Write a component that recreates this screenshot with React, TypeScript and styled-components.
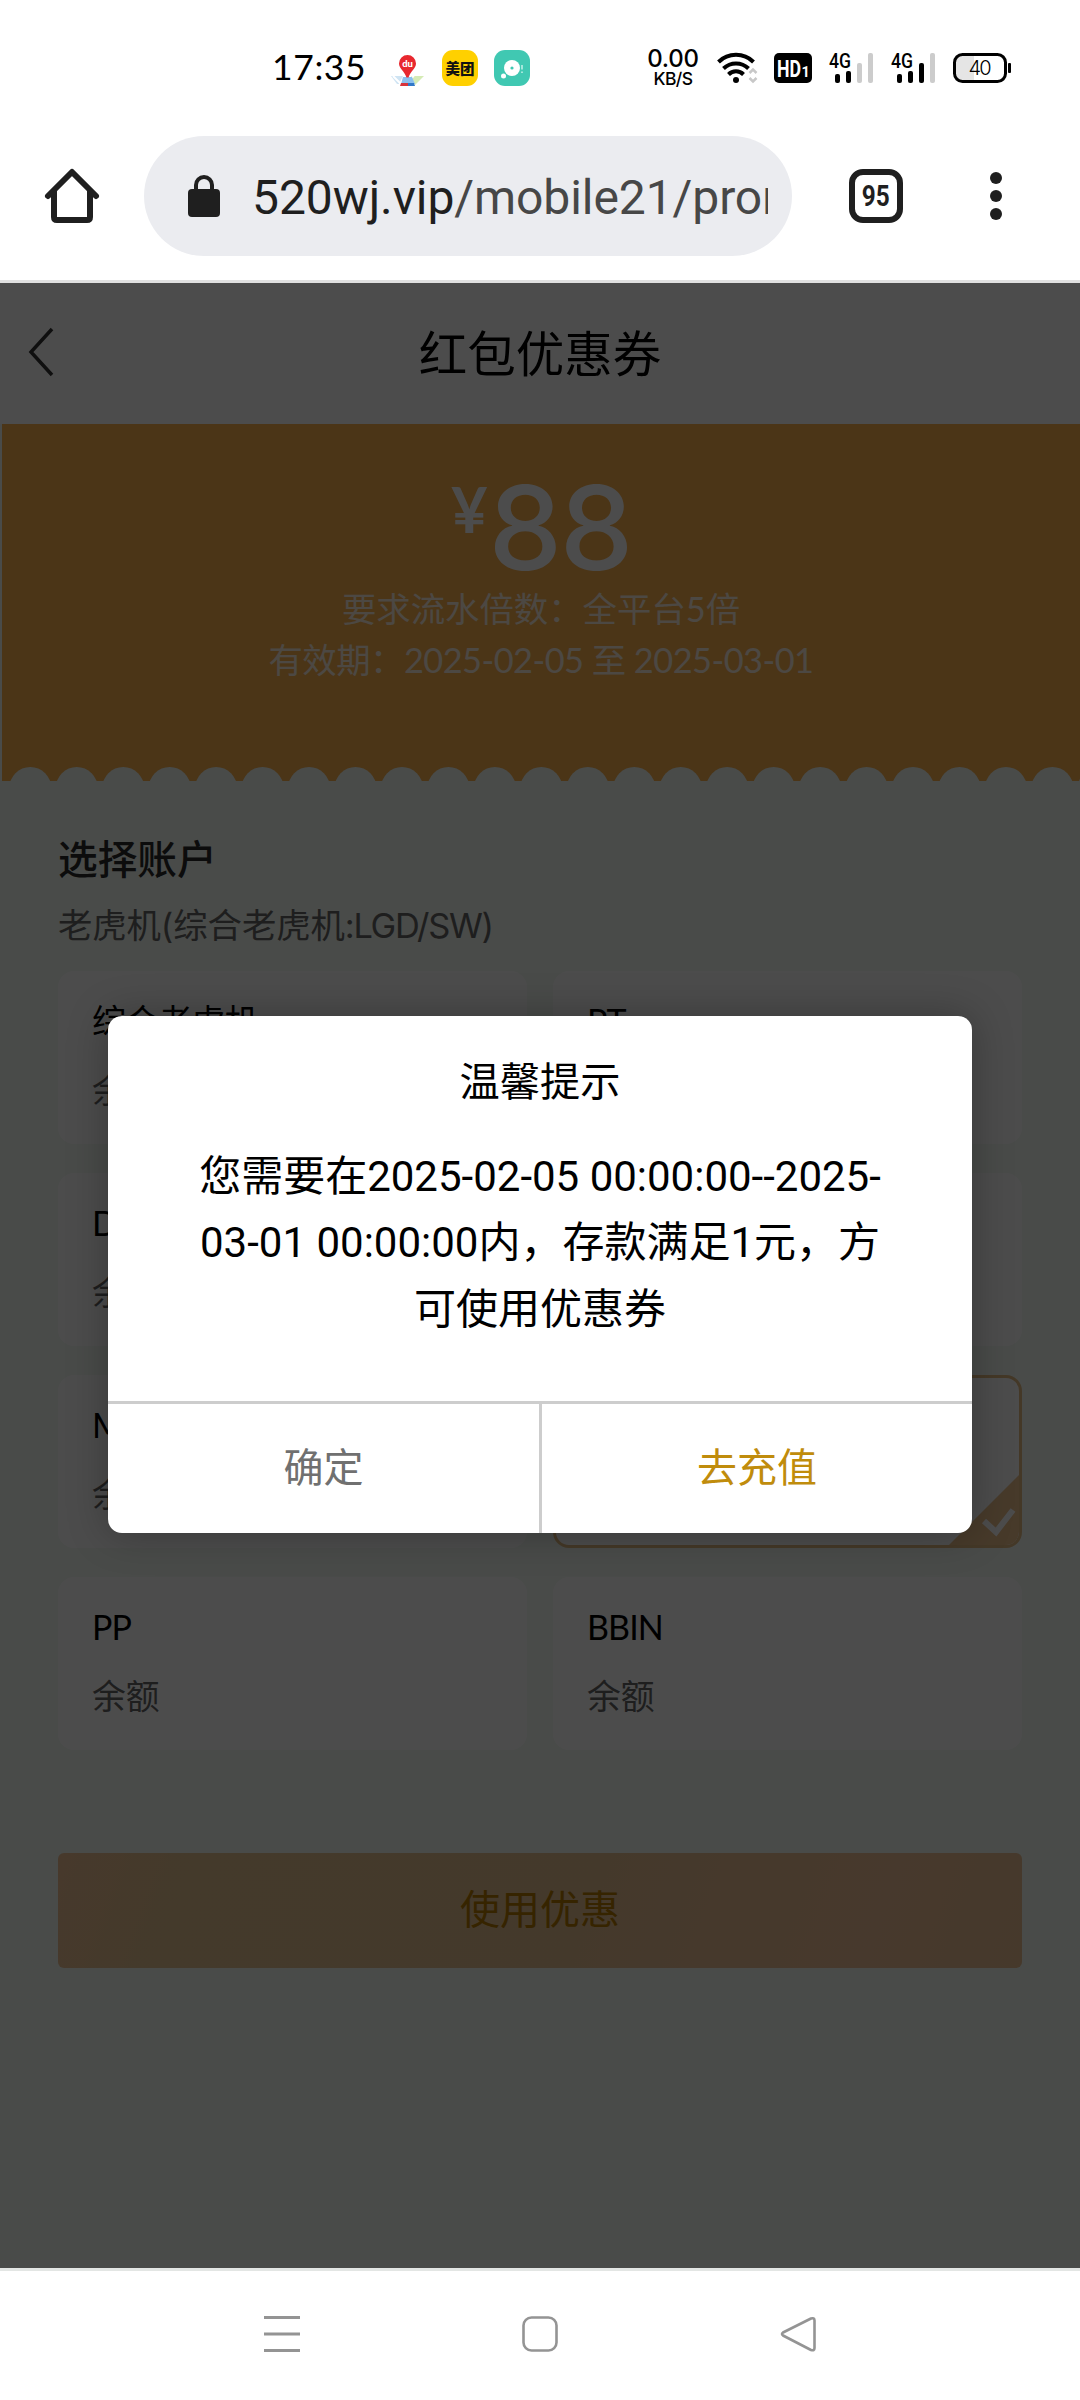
import React from "react";
import styled, { createGlobalStyle } from "styled-components";

const cjk = `"Noto Sans CJK SC", sans-serif`;

const GlobalStyle = createGlobalStyle`
  * { box-sizing: border-box; }
  body { margin: 0; background: #fff; font-family: Roboto, ${cjk}; }
  button { border: 0; background: none; padding: 0; font: inherit; }
  svg { display: block; flex: none; overflow: visible; }
`;

const Screen = styled.div`
  width: 1080px;
  height: 2400px;
  display: flex;
  flex-direction: column;
  overflow: hidden;
  background: #fff;
`;

const StatusBar = styled.div`
  height: 136px;
  padding: 0 68px 0 272px;
  display: flex;
  justify-content: space-between;
`;

const StatusGroup = styled.div<{ $gap: number }>`
  display: flex;
  align-items: center;
  height: 135px;
  gap: ${(p) => p.$gap}px;
`;

const Clock = styled.span`
  width: 101px;
  font: 400 35.5px/38px Lato, sans-serif;
  padding-bottom: 2px;
  letter-spacing: 0.6px;
  color: #000;
  white-space: nowrap;
`;

const AppTile = styled.span<{ $bg: string }>`
  display: flex;
  align-items: center;
  justify-content: center;
  width: 36px;
  height: 36px;
  border-radius: 11px;
  background: ${(p) => p.$bg};
  font: 900 14.5px/36px ${cjk};
  color: #111;
`;

const Speed = styled.span`
  display: flex;
  flex-direction: column;
  align-items: center;
  width: 54px;
  font: 500 24px/21px Inter, sans-serif;
  letter-spacing: -0.2px;
  color: #000;
  small {
    font: 500 17.5px/19px Inter, sans-serif;
    letter-spacing: -0.6px;
  }
`;

const Toolbar = styled.div`
  height: 147px;
  border-bottom: 3px solid #e0e0e0;
  display: flex;
  align-items: flex-start;
`;

const ToolButton = styled.button<{ $width: number }>`
  width: ${(p) => p.$width}px;
  height: 120px;
  display: flex;
  align-items: center;
  justify-content: center;
`;

const AddressPill = styled.div`
  width: 648px;
  height: 120px;
  border-radius: 60px;
  background: #ebecf0;
  display: flex;
  align-items: center;
  padding: 0 24px 0 44px;
`;

const Address = styled.div`
  flex: 1;
  margin-left: 32px;
  padding-top: 3px;
  overflow: hidden;
  white-space: nowrap;
  font: 400 48px/60px Roboto, sans-serif;
  letter-spacing: -0.08px;
  color: #474747;
  b {
    font-weight: 400;
    color: #1f1f1f;
  }
`;

const TabCount = styled.span`
  width: 54px;
  height: 54px;
  border: 6px solid #1f1f1f;
  border-radius: 14px;
  display: flex;
  align-items: center;
  justify-content: center;
  font: 700 29px/42px Roboto, sans-serif;
  color: #1f1f1f;
  span {
    transform: scaleX(0.84);
  }
`;

const Page = styled.main`
  position: relative;
  height: 1985px;
  background: #f4faf4;
`;

const PageHeader = styled.header`
  height: 141px;
  display: flex;
  align-items: center;
  padding: 0 29px 3px;
  background: #fff;
  h1 {
    flex: 1;
    margin: -3px 24px 0 0;
    text-align: center;
    font: 400 48.5px/70px ${cjk};
    color: #000;
  }
`;

const Banner = styled.section`
  margin-left: 2px;
  height: 357px;
  display: flex;
  flex-direction: column;
  align-items: center;
  background: #fab14d;
  color: #fff;
`;

const Amount = styled.div`
  display: flex;
  align-items: flex-start;
  height: 163px;
  padding-top: 44px;
  font: 500 117px/120px Inter, sans-serif;
  letter-spacing: -2.4px;
  small {
    margin: -4px 1px 0 0;
    font: 700 63px/90px Lato, sans-serif;
    letter-spacing: 0;
  }
`;

const BannerLine = styled.div<{ $tracking?: number }>`
  height: 51px;
  font: 400 34.4px/44px Lato, ${cjk};
  letter-spacing: ${(p) => p.$tracking ?? 0}px;
  white-space: nowrap;
  opacity: 0.82;
`;

const Scallops = styled.svg`
  margin-top: auto;
`;

const Content = styled.section`
  padding: 50px 58px 0;
  h2 {
    margin: 0;
    font: 500 39.7px/52px ${cjk};
    color: #2b2b2b;
  }
`;

const Subtitle = styled.p`
  margin: 18px 0 20px;
  font: 400 34.4px/50px Inter, ${cjk};
  letter-spacing: -0.1px;
  color: #666;
  span {
    letter-spacing: -1.3px;
  }
`;

const AccountGrid = styled.div`
  display: grid;
  grid-template-columns: 469px 469px;
  gap: 29px 26px;
`;

const AccountCard = styled.div<{ $selected?: boolean }>`
  position: relative;
  height: 173px;
  overflow: hidden;
  padding: 27px 31px;
  border: 3px solid ${(p) => (p.$selected ? "#e3bc84" : "#fff")};
  border-radius: 16px;
  background: #fff;
`;

const AccountName = styled.div`
  font: 400 34px/40px Lato, ${cjk};
  letter-spacing: -0.9px;
  color: #000;
  white-space: nowrap;
`;

const Balance = styled.div`
  margin-top: 26px;
  font: 400 33.8px/44px ${cjk};
  color: #666;
`;

const CornerCheck = styled.svg`
  position: absolute;
  right: 0;
  bottom: 0;
`;

const UseButton = styled.button`
  display: block;
  width: 964px;
  height: 115px;
  padding-bottom: 6px;
  margin-top: 103px;
  border-radius: 6px;
  background: linear-gradient(110deg, #eec094 0%, #e3c190 14%, #e5c092 55%, #efbf96 84%, #e9c092 100%);
  font: 400 40px/109px ${cjk};
  color: #b47800;
`;

const Mask = styled.div`
  position: absolute;
  inset: 0;
  background: rgba(0, 0, 0, 0.7);
`;

const Dialog = styled.div`
  position: absolute;
  left: 108px;
  top: 733px;
  width: 864px;
  height: 517px;
  display: flex;
  flex-direction: column;
  overflow: hidden;
  border-radius: 14px;
  background: #fff;
  box-shadow: 0 0 40px rgba(0, 0, 0, 0.28);
`;

const DialogTitle = styled.div`
  margin-top: 36px;
  height: 54px;
  text-align: center;
  font: 400 40.2px/54px ${cjk};
  color: #000;
`;

const DialogText = styled.p`
  flex: 1;
  margin: 38px 0 0;
  text-align: center;
  font: 400 42px/66.3px Roboto, ${cjk};
  color: #000;
  white-space: nowrap;
`;

const DialogActions = styled.div`
  display: grid;
  grid-template-columns: 431px 1fr;
  height: 132px;
  border-top: 3px solid #cdcdcd;
`;

const DialogButton = styled.button<{ $primary?: boolean }>`
  padding-bottom: 6px;
  font: 400 40px/123px ${cjk};
  color: ${(p) => (p.$primary ? "#c08c0c" : "#707070")};
  border-left: ${(p) => (p.$primary ? "3px solid #cdcdcd" : "0")};
`;

const NavBar = styled.nav`
  flex: 1;
  border-top: 3px solid #e3e6e4;
  padding: 0 264px 4px;
  display: flex;
  align-items: center;
  justify-content: space-between;
`;

const Signal = ({ bars }: { bars: number }) => (
  <svg width="45" height="30" viewBox="0 0 45 30">
    <text x="0" y="15" fontFamily="Roboto, sans-serif" fontSize="20.500" fontWeight="500" textLength="22" lengthAdjust="spacingAndGlyphs">
      4G
    </text>
    {[9, 12, 20, 30].map((h, i) => (
      <rect key={h} x={6 + i * 11} y={30 - h} width="5" height={h} rx="2" fill={i < bars ? "#000" : "#ccc"} />
    ))}
  </svg>
);

const scallopCenters = Array.from({ length: 24 }, (_, i) => 28.3 + i * 46.46);

const accounts = ["综合老虎机", "PT", "DT", "", "MG", "", "PP", "BBIN"];

export default function App() {
  return (
    <Screen>
      <GlobalStyle />
      <StatusBar>
        <StatusGroup $gap={16}>
          <Clock>17:35</Clock>
          <svg width="37" height="36" viewBox="0 0 37 36">
            <path d="M2 26h12l-4 8H8z" fill="#cfe4f3" />
            <path d="M22 26h13l-9 9z" fill="#d5ebb5" />
            <path d="M4 26l8 8M25 26l-4 3" stroke="#fff" strokeWidth="2" />
            <path d="M14 27h9l3 7H12z" fill="#8cc0ee" />
            <path d="M12 33h7v3h-8z" fill="#d8343c" />
            <path d="M19 33h6l1 3h-7z" fill="#3078c8" />
            <path d="M18.500 5a8.500 8.500 0 0 1 8.500 8.500c0 5-5 7-7.500 14h-2c-2.500-7-7.500-9-7.500-14A8.500 8.500 0 0 1 18.500 5z" fill="#e8282f" />
            <text x="18.500" y="17" fontFamily="Roboto, sans-serif" fontSize="9.500" fontWeight="700" fill="#fff" textAnchor="middle">
              du
            </text>
          </svg>
          <AppTile $bg="#ffd000">美团</AppTile>
          <AppTile $bg="#40c8b2">
            <svg width="36" height="36" viewBox="0 0 36 36">
              <circle cx="18" cy="18" r="8" fill="#fff" />
              <circle cx="18" cy="18" r="1.600" fill="#40c8b2" />
              <circle cx="9.500" cy="26" r="2.500" fill="#fff" />
              <path d="M28 15v4.500M28 21.500v1.500" stroke="#a5e6db" strokeWidth="2" />
            </svg>
          </AppTile>
        </StatusGroup>
        <StatusGroup $gap={17}>
          <Speed>
            0.00
            <small>KB/S</small>
          </Speed>
          <svg width="40" height="30" viewBox="0 0 40 30">
            <g fill="none" stroke="#000" strokeWidth="4">
              <path d="M1.500 9a25 25 0 0 1 35 0" />
              <path d="M6.500 15.500a18 18 0 0 1 25 0" />
              <path d="M11.500 21.500a10.500 10.500 0 0 1 15 0" />
            </g>
            <circle cx="19" cy="27" r="3" />
            <path d="M32.500 20l3.500-3.500 3.500 3.500M32.500 25l3.500 3.500 3.500-3.500" fill="none" stroke="#c8c8c8" strokeWidth="2.500" />
          </svg>
          <svg width="38" height="30" viewBox="0 0 38 30">
            <rect width="38" height="30" rx="5" />
            <g fill="#fff" fontFamily="Roboto, sans-serif" fontWeight="700">
              <text x="3" y="23.500" fontSize="23.500" textLength="24" lengthAdjust="spacingAndGlyphs">
                HD
              </text>
              <text x="27.500" y="23.500" fontSize="14.500">
                1
              </text>
            </g>
          </svg>
          <Signal bars={2} />
          <Signal bars={3} />
          <svg width="59" height="30" viewBox="0 0 59 30">
            <path d="M9 2h12v26H9a7 7 0 0 1-7-7V9a7 7 0 0 1 7-7z" fill="#e5e5e5" />
            <rect x="1.500" y="1.500" width="51" height="27" rx="8" fill="none" stroke="#000" strokeWidth="3" />
            <rect x="55" y="10" width="3" height="10" rx="1" />
            <text x="27" y="22" fontFamily="Inter, sans-serif" fontSize="20" fontWeight="300" textAnchor="middle" textLength="23">
              40
            </text>
          </svg>
        </StatusGroup>
      </StatusBar>

      <Toolbar>
        <ToolButton $width={144} aria-label="主页">
          <svg width="54" height="54" viewBox="0 0 54 54" fill="none" stroke="#1f1f1f" strokeWidth="6" strokeLinecap="round" strokeLinejoin="round">
            <path d="M3 27L27 3l24 24" />
            <path d="M9 22v26q0 3 3 3h30q3 0 3-3V22" strokeLinecap="butt" />
          </svg>
        </ToolButton>
        <AddressPill>
          <svg width="32" height="42" viewBox="0 0 32 42">
            <rect x="0" y="14" width="32" height="28" rx="4" fill="#1f1f1f" />
            <path d="M8 16v-6a8 8 0 0 1 16 0v6" fill="none" stroke="#1f1f1f" strokeWidth="4" />
          </svg>
          <Address>
            <b>520wj.vip</b>/mobile21/promo
          </Address>
        </AddressPill>
        <ToolButton $width={168} aria-label="标签页">
          <TabCount>
            <span>95</span>
          </TabCount>
        </ToolButton>
        <ToolButton $width={72} aria-label="更多">
          <svg width="12" height="48" viewBox="0 0 12 48" fill="#1f1f1f">
            <circle cx="6" cy="6" r="6" />
            <circle cx="6" cy="24" r="6" />
            <circle cx="6" cy="42" r="6" />
          </svg>
        </ToolButton>
      </Toolbar>

      <Page>
        <PageHeader>
          <svg width="24" height="48" viewBox="0 0 24 48" fill="none" stroke="#333" strokeWidth="3.500">
            <path d="M23 1L2 24l21 23" />
          </svg>
          <h1>红包优惠券</h1>
        </PageHeader>
        <Banner>
          <Amount>
            <small>¥</small>88
          </Amount>
          <BannerLine>要求流水倍数：全平台5倍</BannerLine>
          <BannerLine $tracking={-0.55}>有效期：2025-02-05 至 2025-03-01</BannerLine>
          <Scallops width="1078" height="14" viewBox="0 0 1078 14" fill="#f4faf4" style={{ overflow: "hidden" }}>
            {scallopCenters.map((cx) => (
              <circle key={cx} cx={cx} cy="21" r="21" />
            ))}
          </Scallops>
        </Banner>
        <Content>
          <h2>选择账户</h2>
          <Subtitle>
            老虎机(综合老虎机<span>:LGD/SW)</span>
          </Subtitle>
          <AccountGrid>
            {accounts.map((name, i) => (
              <AccountCard key={i} $selected={i === 5}>
                {name && <AccountName>{name}</AccountName>}
                {name && <Balance>余额</Balance>}
                {i === 5 && (
                  <CornerCheck width="70" height="70" viewBox="0 0 70 70">
                    <path d="M70 0v70H0z" fill="#eec28e" />
                    <path d="M35 46l12 11 17-22" fill="none" stroke="#fff" strokeWidth="6" />
                  </CornerCheck>
                )}
              </AccountCard>
            ))}
          </AccountGrid>
          <UseButton>使用优惠</UseButton>
        </Content>
        <Mask />
        <Dialog role="dialog">
          <DialogTitle>温馨提示</DialogTitle>
          <DialogText>
            您需要在2025-02-05 00:00:00--2025-
            <br />
            03-01 00:00:00内，存款满足1元，方
            <br />
            可使用优惠券
          </DialogText>
          <DialogActions>
            <DialogButton>确定</DialogButton>
            <DialogButton $primary>去充值</DialogButton>
          </DialogActions>
        </Dialog>
      </Page>

      <NavBar>
        <svg width="36" height="36" viewBox="0 0 36 36" stroke="#949494" strokeWidth="3">
          <path d="M0 1.500h36M0 18h36M0 34.500h36" />
        </svg>
        <svg width="36" height="36" viewBox="0 0 36 36" fill="none" stroke="#949494" strokeWidth="2.600">
          <rect x="1.500" y="1.500" width="33" height="33" rx="8" />
        </svg>
        <svg width="36" height="36" viewBox="0 0 36 36" fill="none" stroke="#949494" strokeWidth="2.600" strokeLinejoin="round">
          <path d="M31 2.500L3 16.500q-2 1.500 0 3L31 34q3.500 1 3.500-2V4.500q0-3-3.500-2z" />
        </svg>
      </NavBar>
    </Screen>
  );
}
